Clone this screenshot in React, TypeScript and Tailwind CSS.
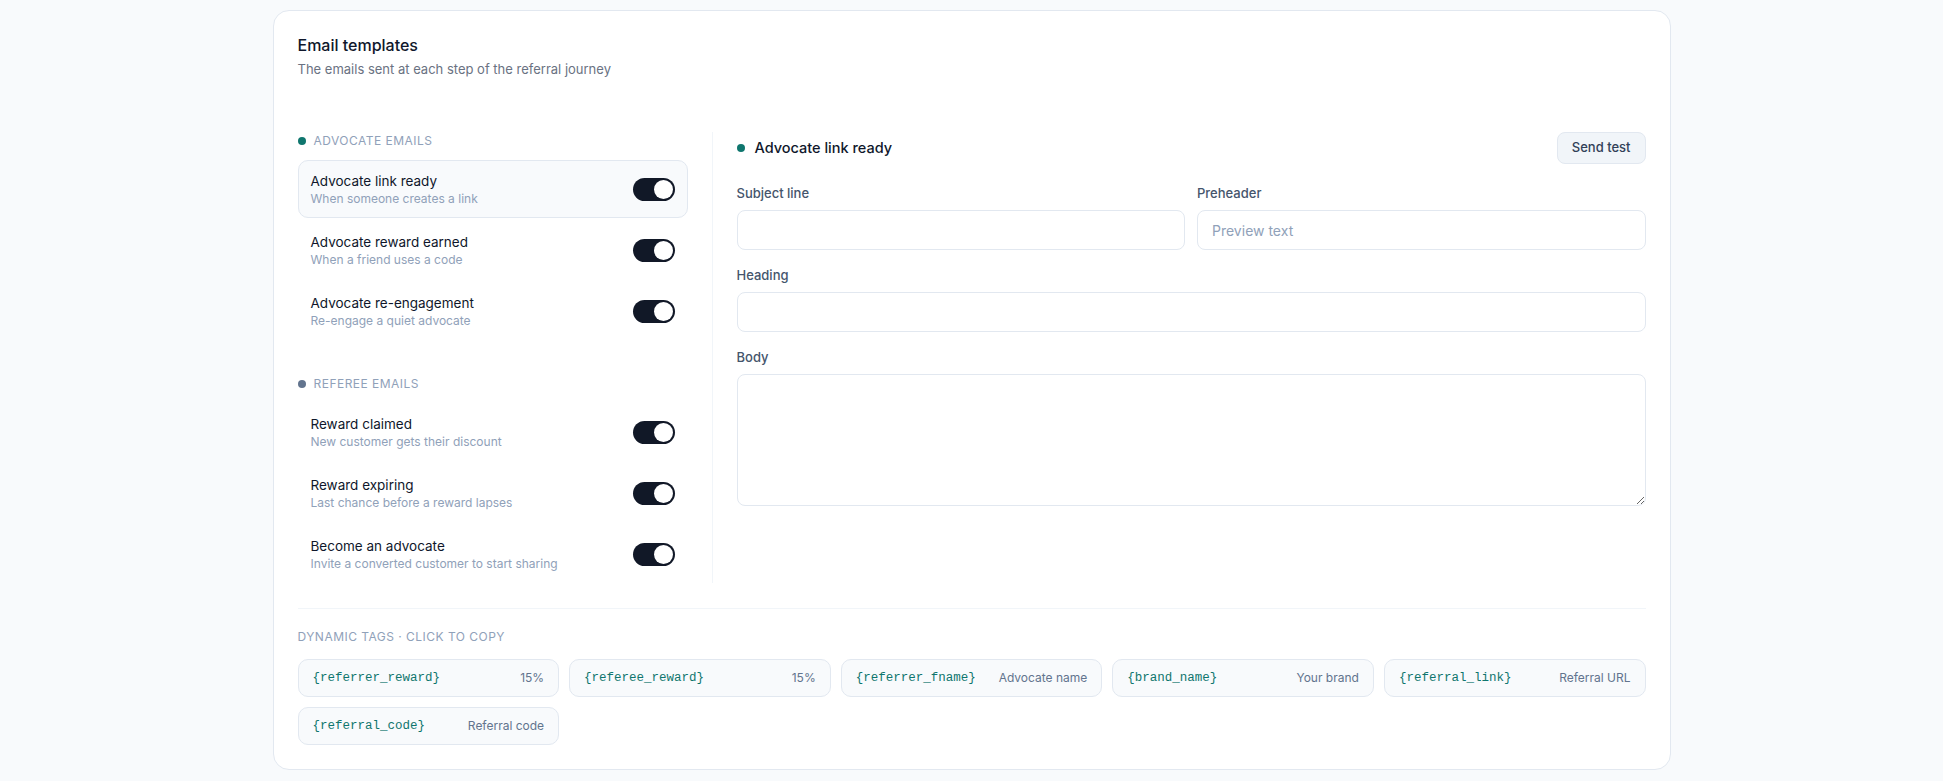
import React, { useState } from 'react';

type Template = { id: string; title: string; description: string };

const advocateTemplates: Template[] = [
  { id: 'link-ready', title: 'Advocate link ready', description: 'When someone creates a link' },
  { id: 'reward-earned', title: 'Advocate reward earned', description: 'When a friend uses a code' },
  { id: 're-engagement', title: 'Advocate re-engagement', description: 'Re-engage a quiet advocate' },
];

const refereeTemplates: Template[] = [
  { id: 'reward-claimed', title: 'Reward claimed', description: 'New customer gets their discount' },
  { id: 'reward-expiring', title: 'Reward expiring', description: 'Last chance before a reward lapses' },
  { id: 'become-advocate', title: 'Become an advocate', description: 'Invite a converted customer to start sharing' },
];

const tags = [
  { tag: '{referrer_reward}', hint: '15%' },
  { tag: '{referee_reward}', hint: '15%' },
  { tag: '{referrer_fname}', hint: 'Advocate name' },
  { tag: '{brand_name}', hint: 'Your brand' },
  { tag: '{referral_link}', hint: 'Referral URL' },
  { tag: '{referral_code}', hint: 'Referral code' },
];

const Toggle: React.FC<{ on: boolean; onChange: () => void }> = ({ on, onChange }) => (
  <button
    type="button"
    onClick={(e) => {
      e.stopPropagation();
      onChange();
    }}
    className={`relative shrink-0 w-[42px] h-[23px] rounded-full transition-colors ${on ? 'bg-[#111827]' : 'bg-slate-200'}`}
  >
    <span
      className={`absolute top-[2px] w-[19px] h-[19px] rounded-full bg-white transition-all ${on ? 'left-[21px]' : 'left-[2px]'}`}
    />
  </button>
);

const GroupHeader: React.FC<{ label: string; dot: string }> = ({ label, dot }) => (
  <div className="flex items-center gap-2 h-[18px] mb-[10px]">
    <span className={`w-2 h-2 rounded-full ${dot}`} />
    <span className="text-[12px] uppercase tracking-[0.04em] text-slate-400">{label}</span>
  </div>
);

export default function App() {
  const [selected, setSelected] = useState('link-ready');
  const [enabled, setEnabled] = useState<Record<string, boolean>>({
    'link-ready': true,
    'reward-earned': true,
    're-engagement': true,
    'reward-claimed': true,
    'reward-expiring': true,
    'become-advocate': true,
  });

  const all = [...advocateTemplates, ...refereeTemplates];
  const current = all.find(t => t.id === selected)!;
  const isAdvocate = advocateTemplates.some(t => t.id === selected);

  const renderItem = (t: Template) => (
    <div
      key={t.id}
      onClick={() => setSelected(t.id)}
      className={`flex items-center justify-between h-[58px] px-3 rounded-[10px] border cursor-pointer ${
        selected === t.id ? 'bg-slate-50 border-slate-200' : 'border-transparent'
      }`}
    >
      <div className="flex flex-col">
        <span className="text-[13.5px] leading-5 text-slate-900">{t.title}</span>
        <span className="text-[12px] leading-4 text-slate-400">{t.description}</span>
      </div>
      <Toggle on={enabled[t.id]} onChange={() => setEnabled(s => ({ ...s, [t.id]: !s[t.id] }))} />
    </div>
  );

  return (
    <div className="min-h-screen bg-[#f8fafc] py-[10px] font-['Inter',sans-serif]">
      <div className="mx-auto w-[1398px] bg-white border border-slate-200 rounded-2xl p-6">
        {/* Header */}
        <h2 className="text-[16px] leading-5 font-medium text-slate-900">Email templates</h2>
        <p className="mt-1 text-[13px] leading-5 text-gray-500">The emails sent at each step of the referral journey</p>

        {/* Template list + editor */}
        <div className="mt-[53px] grid grid-cols-[390px_1fr] gap-6">
          <div>
            <GroupHeader label="Advocate emails" dot="bg-[#0f766e]" />
            <div className="flex flex-col gap-[3px]">{advocateTemplates.map(renderItem)}</div>

            <div className="mt-[35px]">
              <GroupHeader label="Referee emails" dot="bg-slate-500" />
              <div className="flex flex-col gap-[3px]">{refereeTemplates.map(renderItem)}</div>
            </div>
          </div>

          <div className="border-l border-slate-100 pl-6">
            <div className="flex items-center justify-between h-8 mb-5">
              <div className="flex items-center gap-2.5">
                <span className={`w-2 h-2 rounded-full ${isAdvocate ? 'bg-[#0f766e]' : 'bg-slate-500'}`} />
                <span className="text-[14.5px] font-medium text-slate-900">{current.title}</span>
              </div>
              <button className="h-8 px-3.5 rounded-lg border border-slate-200 bg-slate-100 text-[13px] font-medium text-slate-700">
                Send test
              </button>
            </div>

            <div className="flex flex-col gap-4">
              <div className="grid grid-cols-2 gap-3">
                <label className="block">
                  <span className="block text-[13px] leading-[18px] font-medium text-slate-600 mb-2">Subject line</span>
                  <input className="w-full h-10 px-3.5 rounded-lg border border-slate-200 text-[14px] text-slate-900 outline-none placeholder:text-slate-400" />
                </label>
                <label className="block">
                  <span className="block text-[13px] leading-[18px] font-medium text-slate-600 mb-2">Preheader</span>
                  <input
                    placeholder="Preview text"
                    className="w-full h-10 px-3.5 rounded-lg border border-slate-200 text-[14px] text-slate-900 outline-none placeholder:text-slate-400"
                  />
                </label>
              </div>
              <label className="block">
                <span className="block text-[13px] leading-[18px] font-medium text-slate-600 mb-2">Heading</span>
                <input className="w-full h-10 px-3.5 rounded-lg border border-slate-200 text-[14px] text-slate-900 outline-none" />
              </label>
              <label className="block">
                <span className="block text-[13px] leading-[18px] font-medium text-slate-600 mb-2">Body</span>
                <textarea className="block w-full h-[132px] px-3.5 py-2.5 rounded-lg border border-slate-200 text-[14px] text-slate-900 outline-none" />
              </label>
            </div>
          </div>
        </div>

        {/* Dynamic tags */}
        <div className="mt-[25px] border-t border-slate-100 pt-5">
          <div className="text-[12px] leading-4 uppercase tracking-[0.04em] text-slate-400 mb-3.5">
            Dynamic tags · click to copy
          </div>
          <div className="grid grid-cols-5 gap-2.5">
            {tags.map(t => (
              <button
                key={t.tag}
                className="flex items-center justify-between h-[38px] px-3.5 rounded-[10px] border border-slate-200 bg-slate-50"
              >
                <span className="font-['Liberation_Mono',monospace] text-[12.5px] text-[#0f766e]">{t.tag}</span>
                <span className="text-[12px] text-slate-500">{t.hint}</span>
              </button>
            ))}
          </div>
        </div>
      </div>
    </div>
  );
}
